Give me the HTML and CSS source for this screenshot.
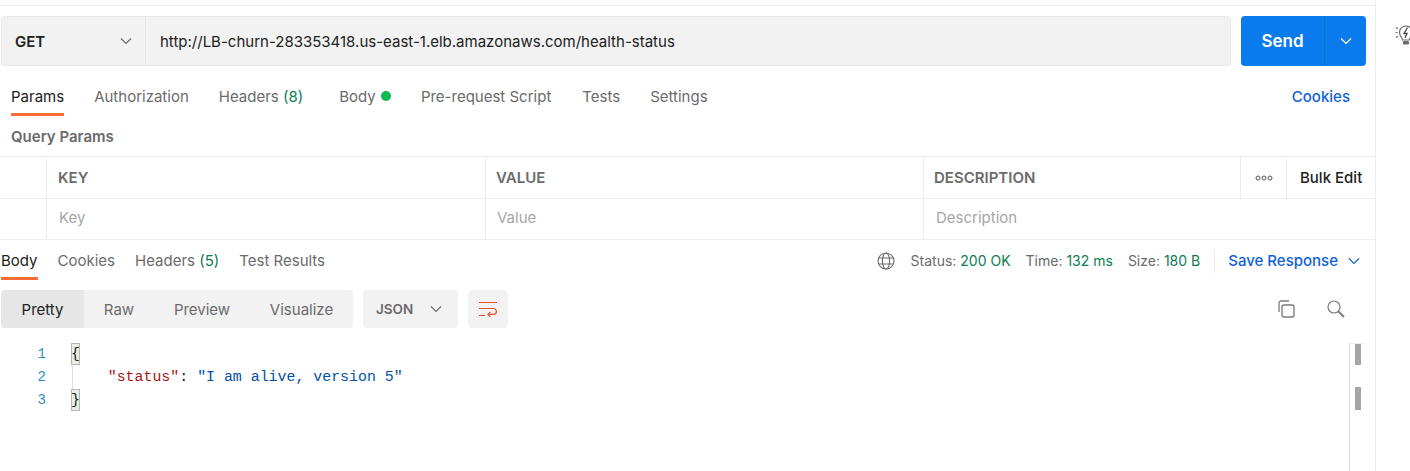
FILE: index.html
```html
<!DOCTYPE html>
<html lang="en">
<head>
<meta charset="utf-8">
<title>Postman request</title>
<link rel="stylesheet" href="styles.css">
</head>
<body>
<div class="app">
  <main class="main">
    <div class="top-gap"></div>
    <section class="request-bar">
      <div class="url-box">
        <div class="method"><span>GET</span>
          <svg class="chev" width="12" height="8" viewBox="0 0 12 8"><path d="M1 1.5l5 5 5-5" fill="none" stroke="#6b6b6b" stroke-width="1.2"/></svg>
        </div>
        <div class="url">http://LB-churn-283353418.us-east-1.elb.amazonaws.com/health-status</div>
      </div>
      <div class="send">
        <span class="send-label">Send</span>
        <span class="send-drop"><svg width="12" height="8" viewBox="0 0 12 8"><path d="M1 1.5l5 5 5-5" fill="none" stroke="#fff" stroke-width="1.2"/></svg></span>
      </div>
    </section>
    <nav class="req-tabs">
      <span class="tab active">Params</span>
      <span class="tab">Authorization</span>
      <span class="tab">Headers <em class="green">(8)</em></span>
      <span class="tab body-tab">Body <i class="dot"></i></span>
      <span class="tab script-tab">Pre-request Script</span>
      <span class="tab">Tests</span>
      <span class="tab">Settings</span>
      <span class="cookies">Cookies</span>
    </nav>
    <h2 class="query-title">Query Params</h2>
    <div class="table">
      <div class="row head">
        <div class="c c0"></div>
        <div class="c c1">KEY</div>
        <div class="c c2">VALUE</div>
        <div class="c c3">DESCRIPTION</div>
        <div class="c c4"><svg width="18" height="6" viewBox="0 0 18 6"><g fill="none" stroke="#555" stroke-width="1"><circle cx="3" cy="3" r="2"/><circle cx="9" cy="3" r="2"/><circle cx="15" cy="3" r="2"/></g></svg></div>
        <div class="c c5">Bulk Edit</div>
      </div>
      <div class="row ph">
        <div class="c c0"></div>
        <div class="c c1">Key</div>
        <div class="c c2">Value</div>
        <div class="c c3">Description</div>
      </div>
    </div>
    <div class="res-head">
      <nav class="res-tabs">
        <span class="tab active">Body</span>
        <span class="tab">Cookies</span>
        <span class="tab">Headers <em class="green">(5)</em></span>
        <span class="tab">Test Results</span>
      </nav>
      <div class="res-meta">
        <svg class="globe" width="18" height="18" viewBox="0 0 18 18"><g fill="none" stroke="#6b6b6b" stroke-width="1.1"><circle cx="9" cy="9" r="8"/><ellipse cx="9" cy="9" rx="3.6" ry="8"/><path d="M1.6 6h14.8M1.6 12h14.8"/></g></svg>
        <span class="stat">Status: <b>200 OK</b></span>
        <span class="stat">Time: <b>132 ms</b></span>
        <span class="stat">Size: <b>180 B</b></span>
        <span class="save">Save Response
          <svg width="12" height="8" viewBox="0 0 12 8"><path d="M1 1.5l5 5 5-5" fill="none" stroke="#0f62d6" stroke-width="1.2"/></svg>
        </span>
      </div>
    </div>
    <div class="toolbar">
      <div class="modes">
        <span class="mode on">Pretty</span>
        <span class="mode raw">Raw</span>
        <span class="mode prev">Preview</span>
        <span class="mode vis">Visualize</span>
      </div>
      <div class="lang"><span>JSON</span><svg width="12" height="8" viewBox="0 0 12 8"><path d="M1 1.5l5 5 5-5" fill="none" stroke="#6b6b6b" stroke-width="1.2"/></svg></div>
      <div class="wrap-btn"><svg width="20" height="16" viewBox="0 0 20 16"><path d="M1 1.500h18M1 7.500h14.500a2.800 2.800 0 0 1 0 5.800H10M12.500 10.800L10 13.300l2.500 2.500M1 14.500h6" fill="none" stroke="#e0532f" stroke-width="1.200"/></svg></div>
      <div class="tools">
        <svg width="20" height="20" viewBox="0 0 20 20"><g fill="none" stroke="#7a7a7a" stroke-width="1.300"><rect x="6" y="6" width="12" height="12" rx="2"/><path d="M3 13V4a2 2 0 0 1 2-2h8"/></g></svg>
        <svg width="20" height="20" viewBox="0 0 20 20"><g fill="none" stroke="#7a7a7a"><circle cx="8" cy="8" r="6" stroke-width="1.200"/><path d="M12.500 12.500L18 18" stroke-width="2"/></g></svg>
      </div>
    </div>
    <div class="editor">
      <div class="gutter"><div>1</div><div>2</div><div>3</div></div>
      <pre class="code"><span class="brace">{</span>
<span class="line-guide">    <span class="k">"status"</span><span class="p">:</span> <span class="s">"I am alive, version 5"</span></span>
<span class="brace">}</span></pre>
      <div class="scroll"><i class="thumb"></i><i class="thumb second"></i></div>
    </div>
  </main>
  <aside class="side">
    <svg width="20" height="22" viewBox="0 0 20 22"><g fill="none" stroke="#6b6b6b" stroke-width="1.200"><path d="M7.500 16c0-2.800-3-3.800-3-7.500a6.500 6.500 0 0 1 13 0c0 3.700-3 4.700-3 7.500z"/><path d="M1 3.500l2 1.200M0.500 8.500h2M1 13.500l2-1.200"/></g><path d="M12.500 3.500L9 9.500h3L10 14" fill="none" stroke="#444" stroke-width="1.300"/><rect x="8" y="17" width="6" height="3.500" rx="1" fill="#6b6b6b"/></svg>
  </aside>
</div>
</body>
</html>
```

FILE: styles.css
```css
* { box-sizing: border-box; }
html, body { margin: 0; padding: 0; background: #fff; }
body { width: 1410px; height: 471px; overflow: hidden; font-family: Inter, "Liberation Sans", sans-serif; font-size: 15px; color: #6b6b6b; }
.app { display: flex; height: 471px; }
.main { width: 1376px; flex: none; border-right: 1px solid #ededed; display: flex; flex-direction: column; }
.side { flex: 1; min-width: 0; padding: 24px 0 0 19px; overflow: hidden; }

.top-gap { height: 16px; padding-top: 5px; }
.top-gap::before { content: ""; display: block; height: 1px; background: #ededed; }

.request-bar { display: flex; height: 50px; padding-left: 1px; }
.url-box { width: 1230px; display: flex; background: #f2f2f2; border: 1px solid #e6e6e6; border-radius: 4px; }
.method { width: 144px; flex: none; border-right: 1px solid #e6e6e6; display: flex; align-items: center; justify-content: space-between; padding: 0 13px 0 13px; font-weight: 600; color: #212121; }
.url { padding-left: 14px; display: flex; align-items: center; color: #212121; }
.send { width: 125px; margin-left: 10px; display: flex; background: #097bed; border-radius: 4px; color: #fff; }
.send-label { width: 84px; display: flex; align-items: center; justify-content: center; font-weight: 600; font-size: 17px; border-right: 1px solid #0a6fd6; }
.send-drop { flex: 1; display: flex; align-items: center; justify-content: center; }

.req-tabs { display: flex; height: 50px; padding: 0 25px 0 11px; }
.tab { display: flex; align-items: center; white-space: pre; margin-right: 30px; color: #6b6b6b; border-bottom: 3px solid transparent; padding-top: 13px; }
.tab.active { color: #212121; border-bottom-color: #ff6c37; }
.body-tab { margin-left: 6px; }
.script-tab { margin-right: 31px; }
.green { font-style: normal; color: #0c7d50; }
.dot { width: 10px; height: 10px; border-radius: 50%; background: #0cbb52; margin-left: 1px; }
.cookies { margin-left: auto; align-self: center; margin-top: 10px; color: #0f62d6; font-weight: 500; }

.query-title { margin: 0; height: 40px; padding: 12px 0 0 11px; font-size: 15px; line-height: 18px; font-weight: 600; color: #6b6b6b; }

.table { border-top: 1px solid #ededed; }
.row { display: flex; border-bottom: 1px solid #ededed; }
.row.head { height: 42px; }
.row.ph { height: 41px; }
.c { display: flex; align-items: center; border-right: 1px solid #ededed; padding-left: 11px; }
.c0 { width: 47px; }
.c1 { width: 439px; }
.c2 { width: 438px; }
.c3 { width: 317px; }
.c4 { width: 46px; padding: 0; justify-content: center; }
.c5 { flex: 1; border-right: 0; padding-left: 13px; color: #212121; font-weight: 500; }
.head .c1, .head .c2, .head .c3 { font-weight: 600; }
.head .c2, .head .c3 { padding-left: 10px; }
.ph .c { color: #a6a6a6; padding-left: 12px; padding-bottom: 3px; }
.ph .c2 { padding-left: 11px; }
.ph .c3 { border-right: 0; }

.res-head { display: flex; height: 41px; justify-content: space-between; }
.res-tabs { display: flex; height: 40px; padding-left: 1px; }
.res-tabs .tab { margin-right: 20px; padding-top: 3px; }
.res-meta { display: flex; align-items: center; padding-right: 15px; font-size: 14px; }
.globe { margin-right: 16px; }
.stat { margin-right: 15px; }
.stat b { font-weight: 400; color: #0c7d50; }
.save { border-left: 1px solid #ededed; height: 24px; display: flex; align-items: center; gap: 10px; padding-left: 13px; margin-left: -1px; color: #0f62d6; font-weight: 500; font-size: 15px; }

.toolbar { display: flex; height: 38px; margin-top: 9px; padding-left: 1px; padding-right: 29px; }
.modes { display: flex; width: 352px; background: #f2f2f2; border-radius: 4px; overflow: hidden; }
.mode { display: flex; align-items: center; justify-content: center; }
.mode.on { width: 83px; background: #e6e6e6; color: #212121; }
.mode.raw { width: 70px; }
.mode.prev { width: 96px; }
.mode.vis { width: 103px; }
.lang { width: 95px; margin-left: 10px; background: #f2f2f2; border-radius: 4px; display: flex; align-items: center; justify-content: space-between; padding: 0 16px 0 13px; font-weight: 600; font-size: 13.500px; }
.wrap-btn { width: 40px; margin-left: 10px; background: #f2f2f2; border-radius: 4px; display: flex; align-items: center; justify-content: center; }
.tools { margin-left: auto; display: flex; gap: 30px; align-items: center; }

.editor { display: flex; flex: 1; margin-top: 15px; min-height: 0; }
.gutter { width: 46px; text-align: right; font-family: "Liberation Mono", monospace; font-size: 14px; line-height: 23px; color: #2a8fc0; }
.code { margin: 0 0 0 26px; flex: 1; font-family: "Liberation Mono", monospace; font-size: 14.900px; line-height: 23px; color: #212121; }
.brace { display: inline-block; width: 9px; height: 22px; margin-left: -1px; background: #e8f0e4; outline: 1px solid #b5b5b5; outline-offset: -1px; text-align: center; }
.line-guide { display: inline-block; box-shadow: inset 1px 0 #dcdcdc; }
.k { color: #a31515; }
.p { color: #212121; }
.s { color: #0451a5; }
.scroll { width: 17px; margin-right: 9px; border-left: 1px solid #dcdcdc; border-top: 1px solid #efefef; padding-left: 5px; }
.thumb { display: block; width: 6px; height: 21px; background: #a5a5a5; }
.thumb.second { margin-top: 22px; height: 23px; }
```
